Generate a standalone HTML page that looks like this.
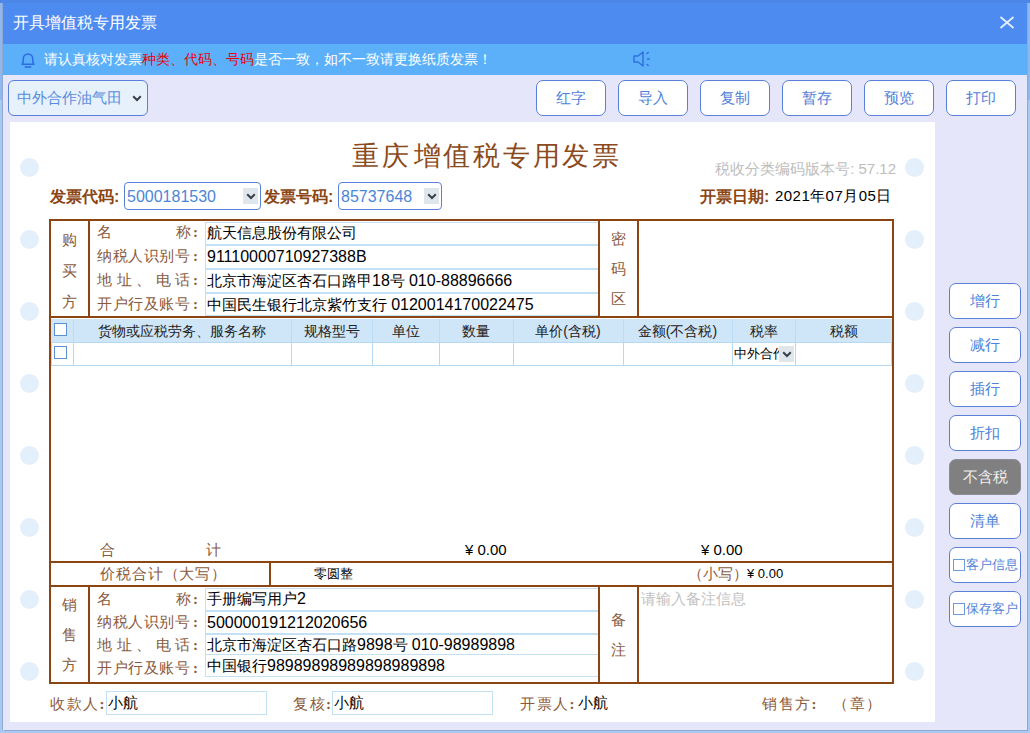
<!DOCTYPE html>
<html lang="zh">
<head>
<meta charset="utf-8">
<title>开具增值税专用发票</title>
<style>
*{box-sizing:border-box;margin:0;padding:0}
html,body{width:1030px;height:733px;overflow:hidden}
body{position:relative;background:linear-gradient(#4c86e6 0,#4c86e6 3px,#8fb8ee 3px,#8fb8ee 100px,#aac9f1 100px);font-family:"Liberation Sans",sans-serif;font-size:14px;color:#000}
.abs{position:absolute}
#win{position:absolute;left:3px;top:3px;width:1024px;height:727px;background:#e6e6fa;overflow:hidden;box-shadow:1px 1px 0 #8ea9d3,-1px 0 0 #8ea9d3}
#title{position:absolute;left:0;top:0;width:1024px;height:41px;background:#4e8bf1}
#title .t{position:absolute;left:10px;top:9px;font-size:16px;color:#fff;line-height:22px;white-space:nowrap}
#notice{position:absolute;left:0;top:41px;width:1024px;height:31px;background:#5cb0fa}
#notice .t{position:absolute;left:41px;top:6px;font-size:14px;line-height:18px;color:#fff;white-space:nowrap}
#notice .t b{font-weight:normal;color:#e8000a}
.sel{position:absolute;border:1px solid #5a7fd8;border-radius:6px;background:#e6f1fc;color:#4a7fd6;white-space:nowrap;overflow:hidden}
.sel .arr{position:absolute;right:2px;top:50%;width:15px;height:16px;margin-top:-8px;background:#dfe6ec}
.btn{position:absolute;height:36px;width:70px;border:1px solid #5a7fd8;border-radius:7px;background:#fff;color:#4f82d8;font-size:15px;line-height:34px;text-align:center;white-space:nowrap}
#paper{position:absolute;left:7px;top:119px;width:925px;height:600px;background:#fff}
.hole{position:absolute;width:19px;height:19px;border-radius:50%;background:#e3f0fb}
.brown{color:#8b4513}
.kai{font-family:"Liberation Serif",serif;color:#8a5a3c}
.line{position:absolute;background:#8b4513}
.inp{position:absolute;border:1px solid #c3e0f5;background:#fff;font-size:15px;line-height:20px;white-space:nowrap;overflow:hidden;padding-left:1px}
.lbl{position:absolute;font-size:15px;line-height:20px;white-space:nowrap}
.n{font-size:16px}
.lbl i{position:absolute;left:96px;top:0;font-style:normal;letter-spacing:0;font-weight:bold}
.hd{position:absolute;top:319px;height:24px;font-size:14px;line-height:24px;text-align:center;white-space:nowrap;color:#222}
.cell{position:absolute;top:342px;height:24px;border:1px solid #b5d9f3;background:#fff}
.cb{position:absolute;width:13px;height:13px;border:1px solid #5b92d6;background:#fff}
.sb{width:72px;height:36px;line-height:34px}
.cbi{display:inline-block;width:12px;height:12px;border:1px solid #6d9ad8;background:#fff;vertical-align:-2px;margin-right:1px}
</style>
</head>
<body>
<div id="win">
  <div id="title"><div class="t">开具增值税专用发票</div>
    <svg class="abs" style="left:995px;top:11px" width="18" height="17" viewBox="0 0 18 17"><path d="M2.500 3L15.500 14M15.500 3L2.500 14" stroke="#e3f1ff" stroke-width="1.700" fill="none"/></svg>
  </div>
  <div id="notice">
    <svg class="abs" style="left:16px;top:6px" width="18" height="19" viewBox="0 0 18 19"><path d="M3 14.2C4.6 12.6 4.3 11 4.3 8.6a4.7 4.7 0 0 1 9.4 0c0 2.4-.3 4 1.3 5.600z" stroke="#2a6be0" stroke-width="1.5" fill="none" stroke-linejoin="round"/><path d="M6.200 17h5.600" stroke="#2a6be0" stroke-width="1.400" fill="none" stroke-linecap="round"/></svg>
    <div class="t">请认真核对发票<b>种类、代码、号码</b>是否一致，如不一致请更换纸质发票！</div>
    <svg class="abs" style="left:629px;top:6px" width="22" height="18" viewBox="0 0 22 18"><path d="M2 6h4l5-4v14l-5-4H2z" stroke="#2f6fe0" stroke-width="1.5" fill="none" stroke-linejoin="round"/><path d="M15 3.5l1.2-1M15.5 9h1.8M15 14.5l1.2 1" stroke="#2f6fe0" stroke-width="1.5" fill="none" stroke-linecap="round"/></svg>
  </div>

  <!-- toolbar -->
  <div class="sel" style="left:5px;top:77px;width:140px;height:36px;color:#5a8ddc;font-size:15px;line-height:34px;padding-left:8px">中外合作油气田<span class="arr" style="background:none;right:3px"><svg width="10" height="7" viewBox="0 0 10 7" style="position:absolute;left:50%;top:50%;margin-left:-5px;margin-top:-3px"><path d="M1.2 1.3L5 5L8.8 1.3" stroke="#3a3f4c" stroke-width="2" fill="none"/></svg></span></div>
  <div class="btn" style="left:533px;top:77px">红字</div>
  <div class="btn" style="left:615px;top:77px">导入</div>
  <div class="btn" style="left:697px;top:77px">复制</div>
  <div class="btn" style="left:779px;top:77px">暂存</div>
  <div class="btn" style="left:861px;top:77px">预览</div>
  <div class="btn" style="left:943px;top:77px">打印</div>

  <div id="paper"></div>
  <div id="pg" class="abs" style="left:-3px;top:-3px;width:1030px;height:733px">
    <!-- holes -->
    <div class="hole" style="left:20px;top:158px"></div><div class="hole" style="left:905px;top:158px"></div><div class="hole" style="left:20px;top:230px"></div><div class="hole" style="left:905px;top:230px"></div><div class="hole" style="left:20px;top:302px"></div><div class="hole" style="left:905px;top:302px"></div><div class="hole" style="left:20px;top:374px"></div><div class="hole" style="left:905px;top:374px"></div><div class="hole" style="left:20px;top:446px"></div><div class="hole" style="left:905px;top:446px"></div><div class="hole" style="left:20px;top:518px"></div><div class="hole" style="left:905px;top:518px"></div><div class="hole" style="left:20px;top:590px"></div><div class="hole" style="left:905px;top:590px"></div><div class="hole" style="left:20px;top:662px"></div><div class="hole" style="left:905px;top:662px"></div>
    <!-- invoice title -->
    <div class="abs kai" style="left:352px;top:138px;font-size:27px;line-height:36px;letter-spacing:2.75px;color:#8b4a1c;white-space:nowrap">重庆<span style="display:inline-block;width:2px"></span>增值税专用发票</div>
    <div class="abs" style="left:640px;top:159px;width:256px;text-align:right;font-size:15px;line-height:20px;color:#bdbdbd;white-space:nowrap">税收分类编码版本号: 57.12</div>
    <!-- code row -->
    <div class="abs brown" style="left:50px;top:187px;font-size:16px;font-weight:bold;line-height:20px;white-space:nowrap">发票代码:</div>
    <div class="sel" style="left:124px;top:182px;width:137px;height:28px;font-size:16px;line-height:27px;padding-left:2px;border-radius:4px;background:#fff;color:#4a86d8">5000181530<span class="arr"><svg width="10" height="7" viewBox="0 0 10 7" style="position:absolute;left:50%;top:50%;margin-left:-5px;margin-top:-3px"><path d="M1.2 1.3L5 5L8.8 1.3" stroke="#3a3f4c" stroke-width="2" fill="none"/></svg></span></div>
    <div class="abs brown" style="left:264px;top:187px;font-size:16px;font-weight:bold;line-height:20px;white-space:nowrap">发票号码:</div>
    <div class="sel" style="left:338px;top:182px;width:104px;height:28px;font-size:16px;line-height:27px;padding-left:2px;border-radius:4px;background:#fff;color:#4a86d8">85737648<span class="arr"><svg width="10" height="7" viewBox="0 0 10 7" style="position:absolute;left:50%;top:50%;margin-left:-5px;margin-top:-3px"><path d="M1.2 1.3L5 5L8.8 1.3" stroke="#3a3f4c" stroke-width="2" fill="none"/></svg></span></div>
    <div class="abs brown" style="left:700px;top:187px;font-size:16px;font-weight:bold;line-height:20px;white-space:nowrap">开票日期:</div>
    <div class="abs" style="left:775px;top:186px;font-size:15px;line-height:20px;white-space:nowrap;letter-spacing:0.45px">2021年07月05日</div>

    <!-- table outer borders -->
    <div class="line" style="left:49px;top:219px;width:845px;height:2px"></div>
    <div class="line" style="left:49px;top:219px;width:2px;height:465px"></div>
    <div class="line" style="left:892px;top:219px;width:2px;height:465px"></div>
    <div class="line" style="left:49px;top:682px;width:845px;height:2px"></div>
    <!-- buyer -->
    <div class="line" style="left:88px;top:219px;width:2px;height:99px"></div>
    <div class="line" style="left:598px;top:219px;width:2px;height:99px"></div>
    <div class="line" style="left:637px;top:219px;width:2px;height:99px"></div>
    <div class="line" style="left:49px;top:316px;width:845px;height:2px"></div>
    <div class="abs kai" style="left:51px;top:225px;width:37px;text-align:center;font-size:15px;line-height:31px">购<br>买<br>方</div>
    <div class="abs kai" style="left:600px;top:224px;width:37px;text-align:center;font-size:15px;line-height:30px">密<br>码<br>区</div>
    <div class="lbl kai" style="left:97px;top:222px">名<span style="display:inline-block;width:64px"></span>称<i>:</i></div>
    <div class="lbl kai" style="left:97px;top:246px;letter-spacing:0.5px">纳税人识别号<i>:</i></div>
    <div class="lbl kai" style="left:97px;top:270px;letter-spacing:4.5px">地址、电话<i>:</i></div>
    <div class="lbl kai" style="left:97px;top:294px;letter-spacing:0.5px">开户行及账号<i>:</i></div>
    <div class="inp" style="left:205px;top:222px;width:393px;border-right:none;height:23px">航天信息股份有限公司</div>
    <div class="inp" style="left:205px;top:245px;width:393px;border-right:none;height:24px;padding-top:1px"><span class="n">91110000710927388B</span></div>
    <div class="inp" style="left:205px;top:269px;width:393px;border-right:none;height:24px;padding-top:1px">北京市海淀区杏石口路甲<span class="n">18</span>号 <span class="n">010-88896666</span></div>
    <div class="inp" style="left:205px;top:293px;width:393px;border-right:none;height:23px;padding-top:1px">中国民生银行北京紫竹支行 <span class="n">0120014170022475</span></div>

    <!-- items header -->
    <div class="abs" style="left:51px;top:319px;width:841px;height:23px;background:#cfe5f8"></div>
    <div class="abs" style="left:73px;top:319px;width:1px;height:23px;background:#bcdcf5"></div><div class="abs" style="left:291px;top:319px;width:1px;height:23px;background:#bcdcf5"></div><div class="abs" style="left:372px;top:319px;width:1px;height:23px;background:#bcdcf5"></div><div class="abs" style="left:439px;top:319px;width:1px;height:23px;background:#bcdcf5"></div><div class="abs" style="left:513px;top:319px;width:1px;height:23px;background:#bcdcf5"></div><div class="abs" style="left:623px;top:319px;width:1px;height:23px;background:#bcdcf5"></div><div class="abs" style="left:732px;top:319px;width:1px;height:23px;background:#bcdcf5"></div><div class="abs" style="left:795px;top:319px;width:1px;height:23px;background:#bcdcf5"></div>
    <div class="cb" style="left:54px;top:323px"></div>
    <div class="hd" style="left:73px;width:218px">货物或应税劳务、服务名称</div>
    <div class="hd" style="left:291px;width:81px">规格型号</div>
    <div class="hd" style="left:372px;width:67px">单位</div>
    <div class="hd" style="left:439px;width:74px">数量</div>
    <div class="hd" style="left:513px;width:110px">单价(含税)</div>
    <div class="hd" style="left:623px;width:109px">金额(不含税)</div>
    <div class="hd" style="left:732px;width:64px">税率</div>
    <div class="hd" style="left:796px;width:96px">税额</div>
    <!-- row -->
    <div class="cell" style="left:51px;width:23px"></div>
    <div class="cell" style="left:73px;width:219px"></div>
    <div class="cell" style="left:291px;width:82px"></div>
    <div class="cell" style="left:372px;width:68px"></div>
    <div class="cell" style="left:439px;width:75px"></div>
    <div class="cell" style="left:513px;width:111px"></div>
    <div class="cell" style="left:623px;width:110px"></div>
    <div class="cell" style="left:732px;width:64px"></div>
    <div class="cell" style="left:795px;width:97px"></div>
    <div class="cb" style="left:54px;top:346px"></div>
    <div class="abs" style="left:734px;top:344px;width:60px;height:20px;font-size:13px;line-height:20px;white-space:nowrap;overflow:hidden">中外合作<span class="abs" style="right:0;top:2px;width:15px;height:16px;background:#dfe6ec"><svg width="10" height="7" viewBox="0 0 10 7" style="position:absolute;left:50%;top:50%;margin-left:-5px;margin-top:-3px"><path d="M1.2 1.3L5 5L8.8 1.3" stroke="#3a3f4c" stroke-width="2" fill="none"/></svg></span></div>

    <!-- totals -->
    <div class="lbl kai" style="left:100px;top:540px">合<span style="display:inline-block;width:91px"></span>计</div>
    <div class="abs" style="left:465px;top:540px;font-size:15px;line-height:20px;white-space:nowrap">¥ 0.00</div>
    <div class="abs" style="left:701px;top:540px;font-size:15px;line-height:20px;white-space:nowrap">¥ 0.00</div>
    <div class="line" style="left:49px;top:561px;width:845px;height:2px"></div>
    <div class="line" style="left:269px;top:561px;width:2px;height:26px"></div>
    <div class="lbl kai" style="left:100px;top:564px;letter-spacing:0.9px">价税合计（大写）</div>
    <div class="abs" style="left:314px;top:564px;font-size:13px;line-height:20px;white-space:nowrap">零圆整</div>
    <div class="lbl kai" style="left:688px;top:564px">（小写）</div>
    <div class="abs" style="left:747px;top:564px;font-size:13px;line-height:20px;white-space:nowrap">¥ 0.00</div>
    <div class="line" style="left:49px;top:585px;width:845px;height:2px"></div>

    <!-- seller -->
    <div class="line" style="left:88px;top:585px;width:2px;height:98px"></div>
    <div class="line" style="left:598px;top:585px;width:2px;height:98px"></div>
    <div class="line" style="left:637px;top:585px;width:2px;height:98px"></div>
    <div class="abs kai" style="left:51px;top:590px;width:37px;text-align:center;font-size:15px;line-height:30px">销<br>售<br>方</div>
    <div class="abs kai" style="left:600px;top:605px;width:37px;text-align:center;font-size:15px;line-height:30px">备<br>注</div>
    <div class="lbl kai" style="left:97px;top:589px">名<span style="display:inline-block;width:64px"></span>称<i>:</i></div>
    <div class="lbl kai" style="left:97px;top:612px;letter-spacing:0.5px">纳税人识别号<i>:</i></div>
    <div class="lbl kai" style="left:97px;top:635px;letter-spacing:4.5px">地址、电话<i>:</i></div>
    <div class="lbl kai" style="left:97px;top:658px;letter-spacing:0.5px">开户行及账号<i>:</i></div>
    <div class="inp" style="left:205px;top:588px;width:393px;border-right:none;height:23px">手册编写用户<span class="n">2</span></div>
    <div class="inp" style="left:205px;top:611px;width:393px;border-right:none;height:23px;padding-top:1px"><span class="n">500000191212020656</span></div>
    <div class="inp" style="left:205px;top:634px;width:393px;border-right:none;height:23px">北京市海淀区杏石口路<span class="n">9898</span>号 <span class="n">010-98989898</span></div>
    <div class="inp" style="left:205px;top:654px;width:393px;border-right:none;height:23px;padding-top:1px">中国银行<span class="n">98989898989898989898</span></div>
    <div class="abs" style="left:641px;top:589px;font-size:15px;line-height:20px;color:#c2c2c2;white-space:nowrap">请输入备注信息</div>

    <!-- footer -->
    <div class="lbl kai" style="left:50px;top:694px;letter-spacing:1.5px">收款人<b>:</b></div>
    <div class="inp" style="left:106px;top:691px;width:161px;height:24px;padding-top:1px">小航</div>
    <div class="lbl kai" style="left:293px;top:694px;letter-spacing:1.5px">复核<b>:</b></div>
    <div class="inp" style="left:332px;top:691px;width:161px;height:24px;padding-top:1px">小航</div>
    <div class="lbl kai" style="left:520px;top:694px;letter-spacing:1.5px">开票人<b>:</b></div>
    <div class="abs" style="left:578px;top:693px;font-size:15px;line-height:20px;white-space:nowrap">小航</div>
    <div class="lbl kai" style="left:762px;top:694px;letter-spacing:1.5px">销售方<b>:</b></div>
    <div class="lbl kai" style="left:833px;top:694px;letter-spacing:1.5px">（章）</div>

    <!-- side buttons -->
    <div class="btn sb" style="left:949px;top:283px">增行</div>
    <div class="btn sb" style="left:949px;top:327px">减行</div>
    <div class="btn sb" style="left:949px;top:371px">插行</div>
    <div class="btn sb" style="left:949px;top:415px">折扣</div>
    <div class="btn sb" style="left:949px;top:459px;background:#808080;color:#f0f0f0;border-color:#8c8c94">不含税</div>
    <div class="btn sb" style="left:949px;top:503px">清单</div>
    <div class="btn sb" style="left:949px;top:547px;font-size:13px"><span class="cbi"></span>客户信息</div>
    <div class="btn sb" style="left:949px;top:591px;font-size:13px"><span class="cbi"></span>保存客户</div>
  </div>

</div>
</body>
</html>
